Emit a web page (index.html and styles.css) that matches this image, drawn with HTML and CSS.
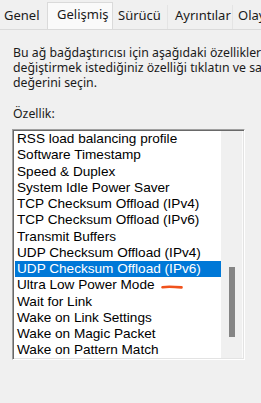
FILE: index.html
```html
<!DOCTYPE html>
<html lang="tr">
<head>
<meta charset="utf-8">
<title>Gelişmiş</title>
<link rel="stylesheet" href="styles.css">
</head>
<body>
<div class="tabs">
  <div class="tab tab-first">Genel</div>
  <div class="tab tab-active">Gelişmiş</div>
  <div class="tab tab-3">Sürücü</div>
  <div class="tab tab-4">Ayrıntılar</div>
  <div class="tab tab-5">Olaylar</div>
</div>
<div class="panel">
  <div class="desc">
    <div class="line">Bu ağ bağdaştırıcısı için aşağıdaki özellikler</div>
    <div class="line">değiştirmek istediğiniz özelliği tıklatın ve sağdaki</div>
    <div class="line">değerini seçin.</div>
  </div>
  <div class="label">Özellik:</div>
  <div class="listbox">
    <ul class="list">
      <li>RSS load balancing profile</li>
      <li>Software Timestamp</li>
      <li>Speed &amp; Duplex</li>
      <li>System Idle Power Saver</li>
      <li>TCP Checksum Offload (IPv4)</li>
      <li>TCP Checksum Offload (IPv6)</li>
      <li>Transmit Buffers</li>
      <li>UDP Checksum Offload (IPv4)</li>
      <li class="selected">UDP Checksum Offload (IPv6)</li>
      <li>Ultra Low Power Mode<svg class="mark" width="22" height="6" viewBox="0 0 22 6"><path d="M1.5 3.2 C6 2.4 12 2.6 20.5 3.4" stroke="#f0521c" stroke-width="2.6" fill="none" stroke-linecap="round"/></svg></li>
      <li>Wait for Link</li>
      <li>Wake on Link Settings</li>
      <li>Wake on Magic Packet</li>
      <li>Wake on Pattern Match</li>
    </ul>
    <div class="scrollbar"><div class="thumb"></div></div>
  </div>
</div>
</body>
</html>
```
FILE: styles.css
```css
html, body {
  margin: 0;
  padding: 0;
}
body {
  width: 261px;
  height: 403px;
  overflow: hidden;
  background: #f0f0f0;
  font-family: "Noto Sans", "Segoe UI", sans-serif;
  font-size: 12.3px;
  color: #1a1a1a;
}
.tabs {
  display: flex;
  align-items: flex-end;
  height: 29px;
  border-bottom: 1px solid #dadada;
  white-space: nowrap;
  overflow: hidden;
  font-size: 13px;
}
.tab {
  flex: none;
  height: 24px;
  line-height: 21px;
  box-sizing: border-box;
  border-right: 1px solid #e4e4e4;
  overflow: hidden;
}
.tab-first {
  padding-left: 4px;
  width: 47px;
  border-right: none;
}
.tab-active {
  width: 66px;
  padding-left: 9px;
  height: 28px;
  line-height: 23px;
  margin-bottom: -1px;
  background: #fafafa;
  border: 1px solid #dadada;
  border-bottom: none;
}
.tab-3 {
  width: 55px;
  padding-left: 5px;
}
.tab-4 {
  width: 65px;
  padding-left: 7px;
}
.tab-5 {
  padding-left: 5px;
  border-right: none;
}
.panel {
  padding: 15px 0 0 13px;
  white-space: nowrap;
}
.desc .line {
  line-height: 15px;
}
.label {
  margin-top: 16px;
  line-height: 15px;
}
.listbox {
  margin: 8px 0 0 -1px;
  width: 233px;
  height: 231px;
  box-sizing: border-box;
  border-top: 1px solid #a0a0a0;
  border-left: 1px solid #a0a0a0;
  border-right: 1px solid #ffffff;
  border-bottom: 1px solid #ffffff;
  box-shadow: inset 1px 1px 0 #696969, inset -1px -1px 0 #e3e3e3;
  padding: 1px;
  display: flex;
}
.list {
  list-style: none;
  margin: 0;
  padding: 0 0 0 1px;
  flex: 1;
  background: #fff;
  font-family: "Liberation Sans", Arial, sans-serif;
  font-size: 13.6px;
  line-height: 16.25px;
  color: #000;
  overflow: hidden;
}
.list li {
  padding-left: 2px;
  height: 16.25px;
}
.list li.selected {
  background: #0078d7;
  color: #fff;
}
.mark {
  margin-left: 6px;
  vertical-align: -1px;
}
.scrollbar {
  width: 21px;
  background: #f0f0f0;
  border-right: 1px solid #fbfbfb;
  display: flex;
  flex-direction: column;
  align-items: center;
}
.thumb {
  margin-top: 136px;
  width: 6px;
  height: 70px;
  background: #858585;
}
```
